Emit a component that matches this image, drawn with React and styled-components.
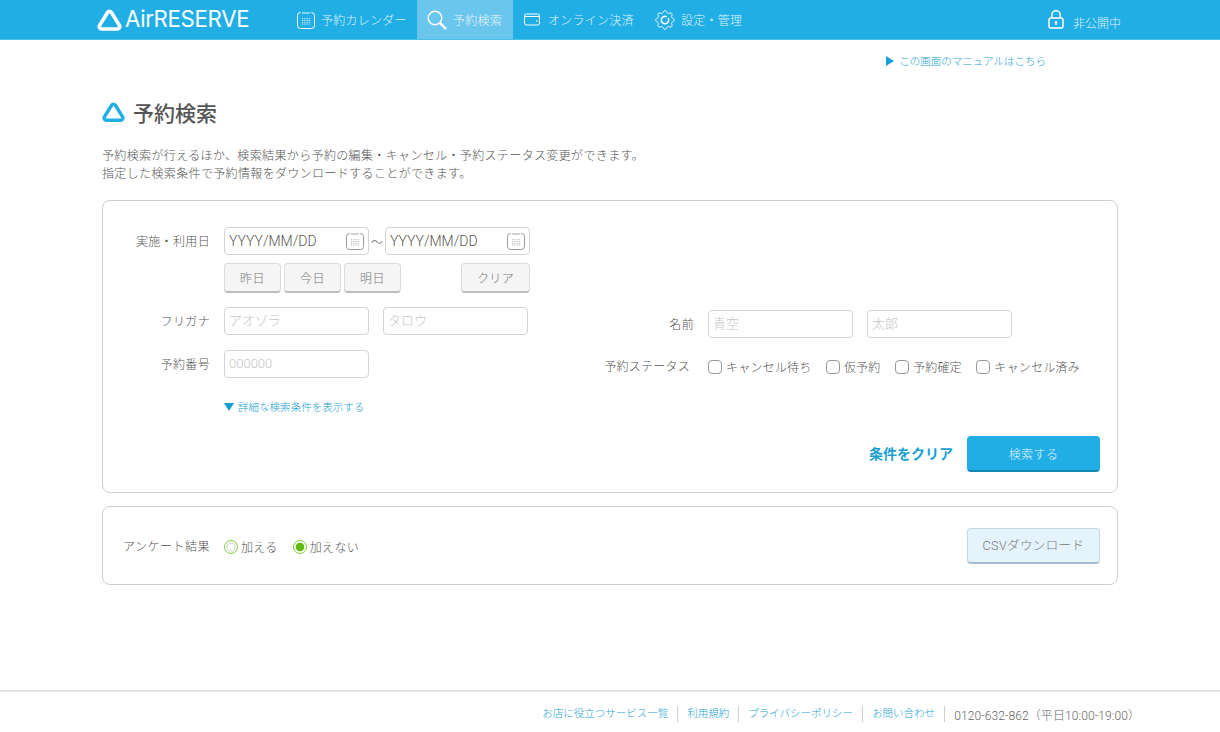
import React from "react";
import styled, { createGlobalStyle } from "styled-components";

const FONT = `"Roboto", "Noto Sans CJK JP", sans-serif`;

const Global = createGlobalStyle`
  * { box-sizing: border-box; }
  html, body { margin: 0; padding: 0; background: #fff; }
  body { font-family: ${FONT}; font-weight: 300; color: #555; font-size: 12px; }
`;

const Page = styled.div`
  min-height: 732px;
  display: flex;
  flex-direction: column;
`;

const Header = styled.header`
  height: 40px;
  background: #20aee5;
  border-bottom: 1px solid #4dbdea;
  display: flex;
  align-items: stretch;
  padding: 0 98px 0 97px;
  color: #fff;
`;

const Logo = styled.div`
  width: 190px;
  display: flex;
  align-items: center;
  gap: 3px;
`;

const LogoText = styled.span`
  font-family: "Inter", sans-serif;
  font-size: 22.2px;
  font-weight: 400;
  letter-spacing: -0.3px;
  color: #fff;
  line-height: 1;
`;

const Nav = styled.nav`
  display: flex;
  align-items: stretch;
`;

const NavItem = styled.a`
  display: flex;
  align-items: center;
  width: ${(p) => p.$w}px;
  gap: ${(p) => p.$gap ?? 6}px;
  padding-left: ${(p) => p.$pad ?? 10}px;
  font-size: 12px;
  letter-spacing: 0.02em;
  color: rgba(255, 255, 255, 0.88);
  background: ${(p) => (p.$active ? "#6bc6ee" : "transparent")};
`;

const Status = styled.div`
  margin-left: auto;
  display: flex;
  align-items: center;
  gap: 9px;
  padding-right: 1px;
  font-size: 12px;
  color: rgba(255, 255, 255, 0.88);
`;

const StatusText = styled.span`
  padding-top: 5px;
`;

const Main = styled.main`
  flex: 1;
  display: flex;
  flex-direction: column;
  padding: 0 102px;
`;

const ManualRow = styled.div`
  display: flex;
  justify-content: flex-end;
  align-items: center;
  gap: 5px;
  padding-right: 72px;
  height: 41px;
  margin-bottom: 2px;
  font-size: 10.5px;
  color: #1a9fd4;
`;

const Arrow = styled.i`
  display: block;
  width: 0;
  height: 0;
  border-style: solid;
  border-width: 5.5px 0 5.5px 8px;
  border-color: transparent transparent transparent #1a9fd4;
`;

const TitleRow = styled.h1`
  margin: 16px 0 0;
  height: 26px;
  display: flex;
  align-items: center;
  gap: 8px;
  font-size: 21px;
  font-weight: 500;
  color: #555;
`;

const Desc = styled.p`
  margin: 22px 0 17px;
  font-size: 12px;
  line-height: 18px;
  letter-spacing: 0.36px;
  color: #555;
`;

const Panel = styled.section`
  width: 1016px;
  border: 1px solid #cfcfcf;
  border-radius: 8px;
`;

const SearchPanel = styled(Panel)`
  padding: 26px 17px 20px 0;
  height: 293px;
`;

const FieldRow = styled.div`
  display: flex;
  align-items: center;
  margin-top: ${(p) => p.$top || 0}px;
  gap: 14px;
`;

const Label = styled.label`
  width: ${(p) => p.$w || 107}px;
  flex: none;
  text-align: right;
  white-space: nowrap;
  padding-right: ${(p) => p.$inset || 0}px;
  padding-bottom: 2px;
  font-size: 12px;
  letter-spacing: ${(p) => p.$ls ?? 0.35}px;
  color: #555;
`;

const DateGroup = styled.div`
  display: flex;
  align-items: center;
`;

const Tilde = styled.span`
  width: 16px;
  text-align: center;
  font-size: 12px;
  color: #555;
`;

const DateBox = styled.div`
  position: relative;
  width: 145px;
`;

const DateIcon = styled.span`
  position: absolute;
  right: 5px;
  top: 5px;
  line-height: 0;
`;

const Input = styled.input`
  display: block;
  width: 145px;
  height: 28px;
  padding: 0 4px ${(p) => (p.$dark ? 0 : 2)}px;
  border: 1px solid #d4d4d4;
  border-radius: 4px;
  background: #fff;
  font-family: ${FONT};
  font-weight: 300;
  font-size: ${(p) => (p.$dark ? 14 : 13)}px;
  color: #555;
  outline: none;
  &::placeholder {
    color: ${(p) => (p.$dark ? "#555" : "#c6c6c6")};
    opacity: 1;
  }
`;

const QuickRow = styled.div`
  display: flex;
  margin: 8px 0 0 121px;
  gap: 3px;
  width: 306px;
`;

const QuickButton = styled.button`
  width: ${(p) => p.$w || 57}px;
  height: 30px;
  margin-left: ${(p) => (p.$push ? "auto" : "0")};
  padding: 0;
  border: 1px solid #dcdcdc;
  border-bottom: 2px solid #bdbdbd;
  border-radius: 4px;
  background: #f5f5f5;
  font-family: ${FONT};
  font-weight: 300;
  font-size: 12px;
  letter-spacing: 0.4px;
  color: #777;
`;

const Columns = styled.div`
  display: flex;
  margin-top: 14px;
`;

const LeftColumn = styled.div`
  width: 501px;
  flex: none;
`;

const RightColumn = styled.div`
  padding-top: 3px;
`;

const InputPair = styled.div`
  display: flex;
  gap: 14px;
`;

const Checks = styled.div`
  display: flex;
  gap: 14.5px;
`;

const CheckLabel = styled.label`
  display: flex;
  align-items: center;
  gap: 4px;
  font-size: 12px;
  letter-spacing: 0.2px;
  color: #555;
`;

const Check = styled.input`
  appearance: none;
  margin: 0;
  width: 14px;
  height: 14px;
  border: 1px solid #999;
  border-radius: 4px;
  background: #fff;
`;

const MoreLink = styled.a`
  display: flex;
  align-items: center;
  gap: 4px;
  height: 14px;
  margin: 21px 0 0 121px;
  font-size: 10.5px;
  letter-spacing: 0.03px;
  color: #1a9fd4;
`;

const ArrowDown = styled.i`
  display: block;
  width: 0;
  height: 0;
  margin-top: 1px;
  border-style: solid;
  border-width: 8px 5.5px 0 5.5px;
  border-color: #1a9fd4 transparent transparent transparent;
`;

const Actions = styled.div`
  display: flex;
  justify-content: flex-end;
  align-items: center;
  gap: 14px;
  margin-top: 23px;
`;

const ClearLink = styled.a`
  font-size: 14px;
  font-weight: 700;
  color: #1a9fd4;
  padding-bottom: 2px;
`;

const PrimaryButton = styled.button`
  width: 133px;
  height: 36px;
  border: 1px solid #20aee5;
  border-bottom: 2px solid #1587b5;
  border-radius: 4px;
  background: #20aee5;
  font-family: ${FONT};
  font-weight: 300;
  font-size: 12px;
  letter-spacing: 0.4px;
  color: rgba(255, 255, 255, 0.9);
  padding: 0;
`;

const SurveyPanel = styled(Panel)`
  margin-top: 13px;
  height: 79px;
  padding-right: 17px;
  display: flex;
  align-items: center;
  justify-content: space-between;
`;

const SurveyLeft = styled.div`
  display: flex;
  align-items: center;
  gap: 14px;
  padding-top: 2px;
`;

const Radios = styled.div`
  display: flex;
  gap: 15px;
`;

const RadioLabel = styled.label`
  display: flex;
  align-items: center;
  gap: 3px;
  font-size: 12px;
  letter-spacing: 0.35px;
  color: #555;
`;

const Radio = styled.input`
  appearance: none;
  margin: 0;
  width: 14px;
  height: 14px;
  border-radius: 50%;
  border: 1.5px solid #86d23e;
  background: ${(p) => (p.$on ? "#62bb08" : "#fff")};
  box-shadow: inset 0 0 0 1.5px #fff, ${(p) => (p.$on ? "inset 0 0 0 1.5px #fff" : "inset 0 0 0 2.5px #d2d2d2")};
  background-clip: padding-box;
`;

const CsvButton = styled.button`
  width: 133px;
  height: 36px;
  padding: 0 0 2px;
  border: 1px solid #c4d5e3;
  border-bottom: 2px solid #a6bdd0;
  border-radius: 4px;
  background: #e5f3fd;
  font-family: ${FONT};
  font-weight: 300;
  font-size: 12.5px;
  letter-spacing: 0.4px;
  color: #777;
`;

const Footer = styled.footer`
  margin-top: auto;
  height: 42px;
  border-top: 2px solid #e4e4e4;
  display: flex;
  align-items: center;
  justify-content: flex-end;
  padding: 4px 80px 0 0;
  font-size: 10.5px;
`;

const FootLink = styled.a`
  color: #1a9fd4;
  padding: 0 9px;
  height: 16px;
  line-height: 16px;
  border-right: 1px solid #cfcfcf;
`;

const Phone = styled.span`
  color: #666;
  font-size: 12px;
  padding-left: 9px;
  letter-spacing: 0.1px;
`;

const TriangleMark = ({ w = 25, h = 22, color = "#fff" }) => (
  <svg width={w} height={h} viewBox="0 0 25 22" fill="none">
    <path
      d="M10.6 3.4 a2.4 2.4 0 0 1 3.8 0 L22.4 16.4 a2.4 2.4 0 0 1 -2.1 3.6 H4.7 a2.4 2.4 0 0 1 -2.1 -3.6 Z"
      stroke={color}
      strokeWidth="3.7"
      strokeLinejoin="round"
    />
  </svg>
);

const CalendarIcon = ({ color = "#fff", dot = "#fff" }) => {
  const dots = [];
  for (let r = 0; r < 4; r++)
    for (let c = 0; c < 5; c++)
      dots.push(<rect key={`${r}-${c}`} x={5 + c * 1.8} y={7.2 + r * 1.8} width="0.9" height="0.9" fill={dot} />);
  return (
    <svg width="18" height="18" viewBox="0 0 18 18" fill="none">
      <path d="M4 1.5 H3.5 a3 3 0 0 0 -3 3 V14.5 a3 3 0 0 0 3 3 H14.5 a3 3 0 0 0 3 -3 V4.5 a3 3 0 0 0 -3 -3 H14" stroke={color} strokeWidth="1" />
      <path d="M6 1 V3 M8 1 V3 M10 1 V3 M12 1 V3" stroke={color} strokeWidth="0.9" />
      {dots}
    </svg>
  );
};

const SearchIcon = () => (
  <svg width="20" height="20" viewBox="0 0 20 20" fill="none">
    <circle cx="8" cy="8" r="6.8" stroke="#fff" strokeWidth="1.4" />
    <path d="M13.2 13.2 L18.3 18.3" stroke="#fff" strokeWidth="2.4" strokeLinecap="round" />
  </svg>
);

const WalletIcon = () => (
  <svg width="16" height="13" viewBox="0 0 16 13" fill="none">
    <rect x="0.5" y="1" width="15" height="11" rx="2" stroke="#fff" strokeWidth="1" />
    <path d="M0.5 3.5 H15.5 M12 8 H14" stroke="#fff" strokeWidth="1" />
  </svg>
);

const gearPath = () => {
  const pts = [];
  for (let i = 0; i < 120; i++) {
    const t = (i / 120) * Math.PI * 2;
    const r = 8.3 + 1.1 * Math.cos(8 * t);
    pts.push(`${(10 + r * Math.cos(t)).toFixed(2)} ${(10 + r * Math.sin(t)).toFixed(2)}`);
  }
  return `M${pts.join(" L")} Z`;
};

const GearIcon = () => (
  <svg width="20" height="20" viewBox="0 0 20 20" fill="none">
    <path d={gearPath()} stroke="#fff" strokeWidth="1" strokeLinejoin="round" />
    <path d="M13.4 8.6 A3.7 3.7 0 1 1 11.4 6.6" stroke="#fff" strokeWidth="1.5" strokeLinecap="round" />
  </svg>
);

const LockIcon = () => (
  <svg width="16" height="19" viewBox="0 0 16 19" fill="none">
    <path d="M3.8 8 V5 a4.2 4.2 0 0 1 8.4 0 V8" stroke="#fff" strokeWidth="1.5" />
    <rect x="1" y="8" width="14" height="10" rx="2" stroke="#fff" strokeWidth="1.5" />
    <circle cx="8" cy="12.4" r="1.3" fill="#fff" />
    <path d="M8 12.5 V15" stroke="#fff" strokeWidth="1.2" />
  </svg>
);

const DateField = () => (
  <DateBox>
    <Input $dark placeholder="YYYY/MM/DD" readOnly />
    <DateIcon>
      <CalendarIcon color="#999" dot="#aaa" />
    </DateIcon>
  </DateBox>
);

const CHECKS = ["キャンセル待ち", "仮予約", "予約確定", "キャンセル済み"];
const FOOT = ["お店に役立つサービス一覧", "利用規約", "プライバシーポリシー", "お問い合わせ"];

export default function App() {
  return (
    <Page>
      <Global />
      <Header>
        <Logo>
          <TriangleMark />
          <LogoText>AirRESERVE</LogoText>
        </Logo>
        <Nav>
          <NavItem $w={130} $gap={6}>
            <CalendarIcon />
            予約カレンダー
          </NavItem>
          <NavItem $w={96} $active>
            <SearchIcon />
            予約検索
          </NavItem>
          <NavItem $w={132} $pad={11} $gap={8}>
            <WalletIcon />
            オンライン決済
          </NavItem>
          <NavItem $w={110} $pad={10} $gap={6}>
            <GearIcon />
            設定・管理
          </NavItem>
        </Nav>
        <Status>
          <LockIcon />
          <StatusText>非公開中</StatusText>
        </Status>
      </Header>
      <Main>
        <ManualRow>
          <Arrow />
          この画面のマニュアルはこちら
        </ManualRow>
        <TitleRow>
          <TriangleMark w={23} h={22} color="#20aee5" />
          予約検索
        </TitleRow>
        <Desc>
          予約検索が行えるほか、検索結果から予約の編集・キャンセル・予約ステータス変更ができます。
          <br />
          指定した検索条件で予約情報をダウンロードすることができます。
        </Desc>
        <SearchPanel>
          <FieldRow>
            <Label>実施・利用日</Label>
            <DateGroup>
              <DateField />
              <Tilde>〜</Tilde>
              <DateField />
            </DateGroup>
          </FieldRow>
          <QuickRow>
            <QuickButton>昨日</QuickButton>
            <QuickButton>今日</QuickButton>
            <QuickButton>明日</QuickButton>
            <QuickButton $push $w={69}>
              クリア
            </QuickButton>
          </QuickRow>
          <Columns>
            <LeftColumn>
              <FieldRow>
                <Label>フリガナ</Label>
                <InputPair>
                  <Input placeholder="アオゾラ" readOnly />
                  <Input placeholder="タロウ" readOnly />
                </InputPair>
              </FieldRow>
              <FieldRow $top={15}>
                <Label>予約番号</Label>
                <Input placeholder="000000" readOnly />
              </FieldRow>
            </LeftColumn>
            <RightColumn>
              <FieldRow>
                <Label $w={90}>名前</Label>
                <InputPair>
                  <Input placeholder="青空" readOnly />
                  <Input placeholder="太郎" readOnly />
                </InputPair>
              </FieldRow>
              <FieldRow $top={19}>
                <Label $w={90} $inset={4} $ls={0.25}>
                  予約ステータス
                </Label>
                <Checks>
                  {CHECKS.map((c) => (
                    <CheckLabel key={c}>
                      <Check type="checkbox" />
                      {c}
                    </CheckLabel>
                  ))}
                </Checks>
              </FieldRow>
            </RightColumn>
          </Columns>
          <MoreLink>
            <ArrowDown />
            詳細な検索条件を表示する
          </MoreLink>
          <Actions>
            <ClearLink>条件をクリア</ClearLink>
            <PrimaryButton>検索する</PrimaryButton>
          </Actions>
        </SearchPanel>
        <SurveyPanel>
          <SurveyLeft>
            <Label $ls={0.5}>アンケート結果</Label>
            <Radios>
              <RadioLabel>
                <Radio type="radio" name="survey" />
                加える
              </RadioLabel>
              <RadioLabel>
                <Radio type="radio" name="survey" $on defaultChecked />
                加えない
              </RadioLabel>
            </Radios>
          </SurveyLeft>
          <CsvButton>CSVダウンロード</CsvButton>
        </SurveyPanel>
      </Main>
      <Footer>
        {FOOT.map((f) => (
          <FootLink key={f}>{f}</FootLink>
        ))}
        <Phone>0120-632-862（平日10:00-19:00）</Phone>
      </Footer>
    </Page>
  );
}
